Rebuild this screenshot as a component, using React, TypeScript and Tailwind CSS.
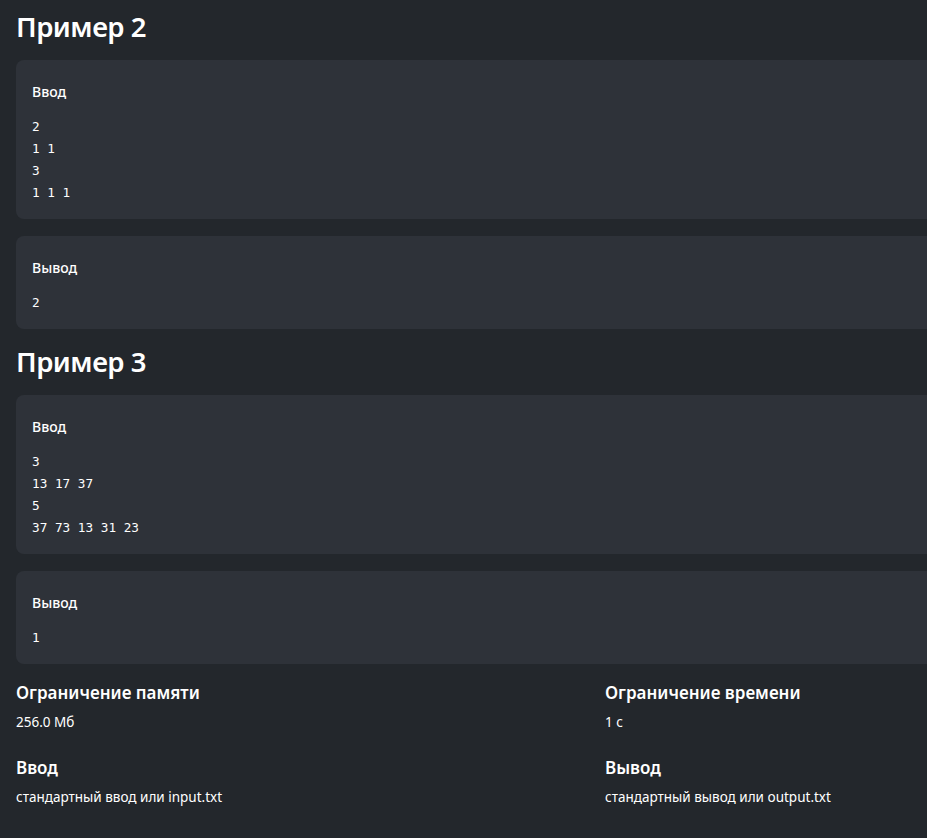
const examples = [
  { title: 'Пример 2', input: ['2', '1 1', '3', '1 1 1'], output: ['2'] },
  { title: 'Пример 3', input: ['3', '13 17 37', '5', '37 73 13 31 23'], output: ['1'] },
];

const limits = [
  { label: 'Ограничение памяти', value: '256.0 Мб' },
  { label: 'Ограничение времени', value: '1 с' },
  { label: 'Ввод', value: 'стандартный ввод или input.txt' },
  { label: 'Вывод', value: 'стандартный вывод или output.txt' },
];

function Block({ label, lines }: { label: string; lines: string[] }) {
  return (
    <div className="rounded-lg bg-[#2e3239] px-4 pt-[22px] pb-[15px]">
      <div className="text-[14px] leading-5 font-medium text-white">{label}</div>
      <pre className="mt-[14px] font-['DejaVu_Sans_Mono',monospace] text-[12.7px] leading-[22px] text-white">
        {lines.join('\n')}
      </pre>
    </div>
  );
}

export default function App() {
  return (
    <div className="w-[927px] h-[838px] overflow-hidden bg-[#23272c] font-['Noto_Sans',sans-serif] text-white">
      <div className="w-[1194px] pl-4 flex flex-col gap-[6px]">
        {examples.map((ex) => (
          <section key={ex.title}>
            <h2 className="pt-[9px] text-[27.5px] leading-9 font-semibold tracking-[-0.5px]">{ex.title}</h2>
            <div className="mt-[15px] flex flex-col gap-[17px]">
              <Block label="Ввод" lines={ex.input} />
              <Block label="Вывод" lines={ex.output} />
            </div>
          </section>
        ))}
        <div className="mt-[11px] grid grid-cols-2 gap-y-[24px]">
          {limits.map((l) => (
            <div key={l.label}>
              <div className="text-[17px] leading-6 font-semibold">{l.label}</div>
              <div className="mt-[7px] text-[13.5px] leading-5">{l.value}</div>
            </div>
          ))}
        </div>
      </div>
    </div>
  );
}
